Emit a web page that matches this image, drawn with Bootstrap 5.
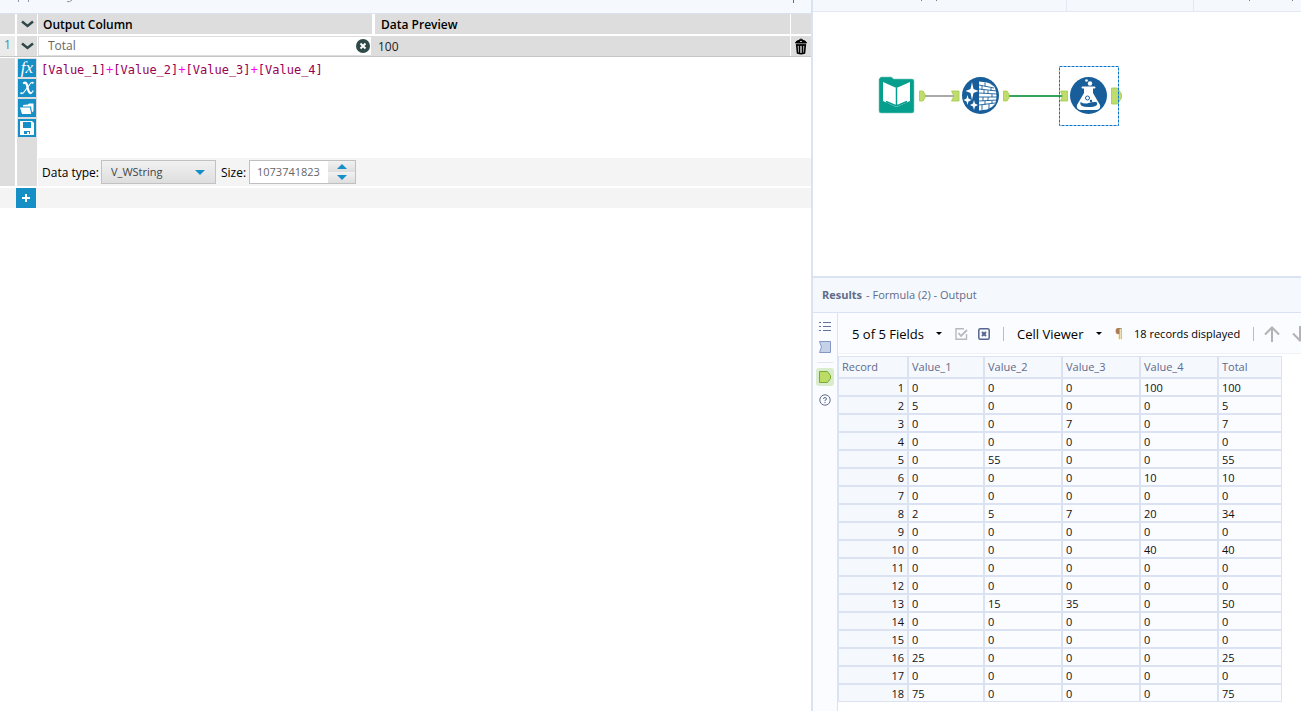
<!DOCTYPE html>
<html lang="en">
<head>
<meta charset="utf-8">
<meta name="viewport" content="width=device-width, initial-scale=1">
<title>Formula tool</title>
<link href="https://cdn.jsdelivr.net/npm/bootstrap@5.3.0/dist/css/bootstrap.min.css" rel="stylesheet">
<script src="https://cdn.jsdelivr.net/npm/bootstrap@5.3.0/dist/js/bootstrap.bundle.min.js"></script>
<style>
  :root { --line: #dbe2f1; --pale: #f5f8fd; --cell: #fbfcff; --slate: #5f6b8c; --grey: #dddddd; --soft: #f4f4f4; --blue: #168fc7; }
  body { font-family: "Open Sans", "Noto Sans", sans-serif; font-size: 11px; line-height: 16px; color: #000; background: #fff; }
  button { border: 0; padding: 0; background: none; color: inherit; }
  svg { display: block; flex: none; }
  .config-pane { flex: 811 1 0; min-width: 0; }
  .work-pane { flex: 488 1 0; min-width: 0; border-left: 2px solid var(--line); }
  .config-title { height: 14px; background: var(--pale); border-bottom: 1px solid var(--line); }
  .grid-line { height: 20px; margin-bottom: 2px; }
  .gutter { width: 15px; margin-right: 2px; background: var(--grey); flex: none; }
  .gutter-row { background: #ebebeb; color: #3d8fa8; font-size: 12px; padding-left: 4px; line-height: 18px; }
  .tool-col { width: 20px; margin-right: 1px; background: var(--grey); flex: none; }
  .row-toggle { width: 23px; margin-right: 0; border-left: 2px solid #fff; border-right: 1px solid #fff; }
  .name-col { width: 334px; flex: none; }
  .head-cell { background: var(--grey); font-weight: 600; font-size: 12px; line-height: 21px; padding-left: 5px; }
  .head-cell.preview { margin-left: 3px; padding-left: 6px; }
  .end-cell { width: 20px; margin-left: 1px; background: var(--grey); flex: none; }
  .row-delete { width: 21px; margin-left: 0; border-left: 1px solid #fff; }
  .active-line { border-bottom: 1px solid #c6c6c6; height: 21px; margin-bottom: 1px; background: var(--grey); }
  .name-box { border: 1px solid var(--grey); background: #fff; padding-right: 1px; }
  .name-box input { border: 0; outline: 0; padding: 0 0 0 9px; color: #666; font-size: 12px; line-height: 18px; min-width: 0; }
  .value-cell { padding-left: 6px; line-height: 22px; font-size: 12px; color: #222; }
  .tool-stack { gap: 2px; padding-top: 1px; }
  .blue-btn { width: 18px; height: 18px; background: var(--blue); color: #fff; overflow: hidden; font-family: "Liberation Serif", serif; font-style: italic; line-height: 16px; }
  .fx-btn { font-size: 17px; }
  .formula { height: 100px; padding: 4px 3px; outline: 0; font: 12px/16px "DejaVu Sans Mono", monospace; color: #905; white-space: pre; }
  .formula i { font-style: normal; color: #f0f; }
  .type-bar { height: 28px; background: var(--soft); padding: 0 4px; font-size: 12px; }
  .type-bar label { padding-top: 1px; }
  .type-label { width: 59px; }
  .size-label { width: 33px; padding-left: 5px; }
  .type-select { width: 115px; height: 24px; }
  .type-select select { appearance: none; width: 100%; height: 100%; border: 1px solid #c2c2c2; border-radius: 0; background: linear-gradient(#f1f1f1, #dedede); padding: 0 0 0 9px; font-size: 11px; color: #444; }
  .type-select svg { position: absolute; right: 11px; top: 10px; pointer-events: none; }
  .spin { width: 107px; height: 24px; border: 1px solid #c0c0c0; background: #fff; }
  .spin input { border: 0; outline: 0; width: 78px; padding: 0 0 0 7px; color: #666; font-size: 11px; }
  .spin button { flex: 1; background: linear-gradient(#f1f1f1, #dedede); display: flex; align-items: center; justify-content: center; }
  .add-line { height: 20px; margin-top: 2px; background: var(--soft); }
  .add-btn { width: 20px; height: 20px; margin-left: 16px; background: var(--blue); display: flex; align-items: center; justify-content: center; }
  .tabs { height: 12px; background: var(--pale); border-bottom: 1px solid #e2e8f4; }
  .tabs div { border-right: 1px solid #e2e8f4; }
  .canvas { height: 264px; }
  .flow { position: absolute; left: 60px; top: 50px; }
  .results-head { height: 37px; border-top: 2px solid var(--line); border-bottom: 1px solid var(--line); background: var(--pale); padding: 0 9px; color: var(--slate); }
  .rail { width: 25px; border-right: 1px solid var(--line); background: var(--cell); padding-top: 8px; flex: none; }
  .rail button { display: block; margin: 0 auto; }
  .rail .on { background: #d9edcc; border-radius: 3px; width: 18px; height: 18px; }
  .rail hr { width: 16px; margin: 8px auto 5px; color: #9aa9cc; }
  .results-bar { height: 41px; background: var(--cell); border-bottom: 1px solid #eef1f8; padding: 1px 0 0 14px; font-size: 12px; white-space: nowrap; }
  .results-bar > * { flex: none; }
  .menu-btn { font-size: 13px; width: 103px; }
  .menu-btn.viewer { width: 98px; }
  .menu-btn svg { margin-right: 13px; }
  .pilcrow { width: 19px; color: #a67c5b; text-align: left; }
  .record-count { font-size: 11px; width: 119px; }
  .vbar { width: 1px; height: 14px; background: #b9bcc4; }
  .data-grid { width: 444px; table-layout: fixed; border-collapse: separate; border-spacing: 0; margin-top: 2px; color: #111; }
  .data-grid th, .data-grid td { border: 1px solid var(--line); height: 18px; padding: 1px 3px 0; line-height: 15px; background: var(--cell); font-weight: 400; }
  .data-grid thead th { height: 22px; padding: 0 3px 1px; background: var(--pale); color: var(--slate); }
  .data-grid tbody th { background: var(--pale); text-align: right; }
</style>
</head>
<body>
<div class="d-flex vh-100 overflow-hidden">

  <section class="config-pane d-flex flex-column" aria-label="Configuration">
    <header class="config-title d-flex justify-content-between">
      <svg width="80" height="4" fill="none" stroke="#8d95a8"><path d="M18.500 0v2M28.500 0v2M67 1.500q3 1 5-1.500"/></svg>
      <svg width="20" height="4" stroke="#5f6b8c"><path d="M2.500 0v3"/></svg>
    </header>

    <div class="grid-line d-flex">
      <div class="gutter"></div>
      <button class="tool-col d-flex align-items-center justify-content-center" aria-label="Collapse all"><svg width="13" height="8" fill="none" stroke="#2f4848" stroke-width="2.500"><path d="M1 1.500l5.500 4.500L12 1.500"/></svg></button>
      <div class="head-cell name-col">Output Column</div>
      <div class="head-cell preview flex-fill">Data Preview</div>
      <div class="end-cell"></div>
    </div>

    <div class="active-line d-flex">
      <div class="gutter gutter-row me-0">1</div>
      <button class="tool-col row-toggle d-flex align-items-center justify-content-center" aria-label="Collapse"><svg width="13" height="8" fill="none" stroke="#2f4848" stroke-width="2.500"><path d="M1 1.500l5.500 4.500L12 1.500"/></svg></button>
      <div class="name-box name-col d-flex align-items-center">
        <input class="flex-fill" type="text" value="Total" aria-label="Output column name">
        <button aria-label="Clear"><svg width="14" height="14"><circle cx="7" cy="7" r="7" fill="#2f4848"/><path d="M4.500 4.500l5 5M9.500 4.500l-5 5" stroke="#fff" stroke-width="2"/></svg></button>
      </div>
      <div class="value-cell flex-fill">100</div>
      <button class="end-cell row-delete d-flex align-items-center justify-content-center" aria-label="Delete"><svg width="12" height="17" fill="none" stroke="#000"><path d="M.5 5q0-2.500 5.500-3 5.500.5 5.500 3z" fill="#000"/><path d="M4 3.500q0-2.500 2-2.500t2 2.500"/><path d="M5 3.500h2" stroke="#bbb"/><path d="M1.700 7l.8 8q3.500 1.500 7 0l.8-8z" fill="#aaa" stroke-width="1.600"/><path d="M4.500 7.500v7.500M7.500 7.500v7.500M1 7h10" stroke-width="1.200"/></svg></button>
    </div>

    <div class="d-flex">
      <div class="gutter"></div>
      <div class="tool-col">
        <div class="tool-stack d-grid justify-content-center">
          <button class="blue-btn fx-btn" aria-label="Functions">fx</button>
          <button class="blue-btn" aria-label="Columns and constants"><svg width="18" height="18" fill="none" stroke="#fff" stroke-linecap="round"><path d="M6 4q2.500-1.500 3.500 4t3 6" stroke-width="2.300"/><path d="M3 14.500q2 .5 3.500-2L12 5q1.200-1.800 3-1.500" stroke-width="1.200"/><path d="M14.500 4h.5M3 14h.5M12.500 14q1.500 0 2.500-2" stroke-width="1.300"/></svg></button>
          <button class="blue-btn" aria-label="Open expression"><svg width="18" height="18" fill="#fff"><path d="M5 6l5-.5L11 4.500h4.500V12l-1.500 1.500L13 7.500H5z"/><path d="M2 8.500h10l1.200 6.500H4z"/></svg></button>
          <button class="blue-btn" aria-label="Save expression"><svg width="18" height="18"><path d="M2 2h12l2 2v12H2z" fill="#fff"/><path d="M5 3h8v6H5zM6 12h6v3H6z" fill="#168fc7"/><path d="M9 13h2v2H9z" fill="#fff"/></svg></button>
        </div>
      </div>
      <div class="flex-fill">
        <div class="formula" contenteditable="true" spellcheck="false" role="textbox" aria-label="Expression">[Value_1]<i>+</i>[Value_2]<i>+</i>[Value_3]<i>+</i>[Value_4]</div>
        <div class="type-bar d-flex align-items-center">
          <label class="type-label" for="dtype">Data type:</label>
          <div class="type-select position-relative">
            <select id="dtype"><option>V_WString</option></select>
            <svg width="10" height="6"><path d="M0 0h10L5 5z" fill="#168fc7"/></svg>
          </div>
          <label class="size-label" for="size">Size:</label>
          <div class="spin d-flex">
            <input id="size" type="text" inputmode="numeric" value="1073741823">
            <div class="d-flex flex-column flex-fill">
              <button aria-label="Increase"><svg width="10" height="5"><path d="M0 5h10L5 0z" fill="#168fc7"/></svg></button>
              <button aria-label="Decrease"><svg width="10" height="5"><path d="M0 0h10L5 5z" fill="#168fc7"/></svg></button>
            </div>
          </div>
        </div>
      </div>
    </div>
    <div class="add-line"><button class="add-btn" aria-label="Add expression"><svg width="8" height="8"><path d="M4 0v8M0 4h8" stroke="#fff" stroke-width="2"/></svg></button></div>
  </section>

  <section class="work-pane d-flex flex-column" aria-label="Workflow">
    <div class="tabs d-flex">
      <div style="width:254px"><svg width="140" height="2" stroke="#7480a0"><path d="M108.500 0v1M123.500 0v1"/></svg></div>
      <div style="width:127px"></div>
      <svg width="107" height="2" stroke="#7480a0"><path d="M55.500 0v1M98.500 0v1"/></svg>
    </div>

    <div class="canvas position-relative overflow-hidden">
      <svg class="flow" width="256" height="66">
        <path d="M51 34h32" stroke="#aaa" stroke-width="2"/>
        <path d="M135 34h55" stroke="#35a45b" stroke-width="2"/>
        <path d="M7 16q0-1 1.500-1h10l2 2H39q2 0 2 2V49q0 2-2 2H8q-2 0-2-2V17z" fill="#069e8c" stroke="#7dc9c0" stroke-width=".6"/>
        <path d="M10 20l13.500 6L37 20v19l-13.500 6L10 39z" fill="#fff"/>
        <path d="M23.500 26v17M13 39.500l10.500 4.500L34 39.500" fill="none" stroke="#069e8c" stroke-width="1.500"/>
        <g fill="#bfdc6c" stroke="#a4c94e" stroke-width=".8">
          <path d="M46.500 29h3.500l2 3v4l-2 3h-3.500z"/><path d="M78.500 29h7.500v10h-7.500l2.500-5z"/>
          <path d="M130.500 29h3.500l2 3v4l-2 3h-3.500z"/><path d="M187.500 29h7v10h-7l2-5z"/>
          <path d="M238.500 26h6l4 6v4l-4 6h-6z"/>
        </g>
        <circle cx="107.500" cy="33.500" r="18.500" fill="#175e9a"/>
        <path d="M106 19.500l8 1q6 2 8 5.500q3 8 0 16-3 4-8 5.500l-8 1z" fill="#fff"/>
        <path d="M106 23l15 3M106 27l18 2M106 31l18 1M106 35h18M106 39l18-1M106 43l16-2M112 20.500v4M118 26v3M109 24v4M115 28.500v3M111 28v3.500M119 32v3M115 35v4M110 35v4M119 38.500v3M112 39v4M116 42v5M109 43v5" stroke="#175e9a" stroke-width=".9"/>
        <path d="M99 20l1.500 7 5 2-5 2-1.500 7-1.500-7-5-2 5-2zM94.500 33l1 3.500 3 1.500-3 1.500-1 3.500-1-3.500-3-1.500 3-1.500zM101 38l1 3.500 3 1.500-3 1.500-1 3.500-1-3.500-3-1.500 3-1.500z" fill="#fff"/>
        <circle cx="215.500" cy="33.500" r="18.500" fill="#175e9a"/>
        <path d="M211 26v5L204 43q-1 4 3 5h17q4-1 3-5L220 31v-5" fill="#fff"/>
        <path d="M209.500 25.500h12" stroke="#fff" stroke-width="2" stroke-linecap="round"/>
        <path d="M207.500 40q4 2.500 8 1t8-1q3 5-8 5-10 0-8-5z" fill="#175e9a"/>
        <circle cx="214.500" cy="36" r="2" fill="none" stroke="#175e9a"/><circle cx="218" cy="39" r="1.200" fill="#175e9a"/>
        <circle cx="217" cy="21.500" r="2.200" fill="#fff"/><circle cx="213.500" cy="18.500" r="1.300" fill="#fff"/>
        <path d="M186.500 4.500h59v59h-59z" fill="none" stroke="#0877d0" stroke-dasharray="3 1"/>
      </svg>
    </div>

    <header class="results-head d-flex align-items-center"><b class="me-1">Results</b><span>- Formula (2) - Output</span></header>
    <div class="d-flex flex-fill" style="min-height:0">
      <nav class="rail" aria-label="Result views">
        <button aria-label="Messages"><svg width="12" height="11" stroke="#66739a"><path d="M0 1.500h2M4 1.500h8M0 5.500h2M4 5.500h8M0 9.500h2M4 9.500h8"/></svg></button>
        <button class="mt-2" aria-label="Input"><svg width="12" height="14" fill="#c6d2ea" stroke="#8497c2"><path d="M.5 1.500h11v11H.5l2-5.500z"/></svg></button>
        <hr>
        <button class="on" aria-label="Output"><svg class="m-auto" width="14" height="14" fill="#bbdd66" stroke="#7ba832"><path d="M1.500 1.500h8l3 4v3l-3 4h-8z"/></svg></button>
        <button class="mt-2" aria-label="Help"><svg width="12" height="12" fill="none" stroke="#5f6b8c"><circle cx="6" cy="6" r="5.200"/><path d="M4.500 5q0-1.500 1.500-1.500T7.500 5Q7.500 6 6 6.300v.9M6 8v1.200"/></svg></button>
      </nav>
      <div class="flex-fill overflow-hidden">
        <div class="results-bar d-flex align-items-center">
          <button class="menu-btn d-flex align-items-center"><span class="flex-fill text-start">5 of 5 Fields</span><svg width="6" height="4"><path d="M0 0h6L3 3z"/></svg></button>
          <button aria-label="Select all"><svg width="13" height="12" fill="none" stroke="#b6b9be"><path d="M9 .700H1v10.500h10.500V6" stroke-width="1.400"/><path d="M3.500 5l2.500 3L12 2" stroke-width="1.800"/></svg></button>
          <button style="margin-left:10px" aria-label="Clear selection"><svg width="12" height="12" fill="none" stroke="#56668f"><rect x=".8" y=".8" width="10.400" height="10.400" rx="1.500" stroke-width="1.500"/><path d="M4 4l4 4M8 4L4 8" stroke-width="2"/></svg></button>
          <span class="vbar" style="margin:0 13px"></span>
          <button class="menu-btn viewer d-flex align-items-center"><span class="flex-fill text-start">Cell Viewer</span><svg width="6" height="4"><path d="M0 0h6L3 3z"/></svg></button>
          <button class="pilcrow" aria-label="Show whitespace">¶</button>
          <span class="record-count">18 records displayed</span>
          <span class="vbar" style="margin-right:10px"></span>
          <button aria-label="Previous"><svg width="16" height="16" fill="none" stroke="#b3b3b3" stroke-width="2"><path d="M8 16V2M1 8.500l7-7 7 7"/></svg></button>
          <button style="margin-left:12px" aria-label="Next"><svg width="16" height="16" fill="none" stroke="#b3b3b3" stroke-width="2"><path d="M8 0v14M1 7.500l7 7 7-7"/></svg></button>
        </div>
        <table class="data-grid">
          <colgroup><col style="width:70px"><col style="width:76px"><col style="width:78px"><col style="width:78px"><col style="width:78px"><col style="width:64px"></colgroup>
          <thead><tr><th>Record</th><th>Value_1</th><th>Value_2</th><th>Value_3</th><th>Value_4</th><th>Total</th></tr></thead>
          <tbody>
            <tr><th>1</th><td>0</td><td>0</td><td>0</td><td>100</td><td>100</td></tr>
            <tr><th>2</th><td>5</td><td>0</td><td>0</td><td>0</td><td>5</td></tr>
            <tr><th>3</th><td>0</td><td>0</td><td>7</td><td>0</td><td>7</td></tr>
            <tr><th>4</th><td>0</td><td>0</td><td>0</td><td>0</td><td>0</td></tr>
            <tr><th>5</th><td>0</td><td>55</td><td>0</td><td>0</td><td>55</td></tr>
            <tr><th>6</th><td>0</td><td>0</td><td>0</td><td>10</td><td>10</td></tr>
            <tr><th>7</th><td>0</td><td>0</td><td>0</td><td>0</td><td>0</td></tr>
            <tr><th>8</th><td>2</td><td>5</td><td>7</td><td>20</td><td>34</td></tr>
            <tr><th>9</th><td>0</td><td>0</td><td>0</td><td>0</td><td>0</td></tr>
            <tr><th>10</th><td>0</td><td>0</td><td>0</td><td>40</td><td>40</td></tr>
            <tr><th>11</th><td>0</td><td>0</td><td>0</td><td>0</td><td>0</td></tr>
            <tr><th>12</th><td>0</td><td>0</td><td>0</td><td>0</td><td>0</td></tr>
            <tr><th>13</th><td>0</td><td>15</td><td>35</td><td>0</td><td>50</td></tr>
            <tr><th>14</th><td>0</td><td>0</td><td>0</td><td>0</td><td>0</td></tr>
            <tr><th>15</th><td>0</td><td>0</td><td>0</td><td>0</td><td>0</td></tr>
            <tr><th>16</th><td>25</td><td>0</td><td>0</td><td>0</td><td>25</td></tr>
            <tr><th>17</th><td>0</td><td>0</td><td>0</td><td>0</td><td>0</td></tr>
            <tr><th>18</th><td>75</td><td>0</td><td>0</td><td>0</td><td>75</td></tr>
          </tbody>
        </table>
      </div>
    </div>
  </section>
</div>
</body>
</html>
